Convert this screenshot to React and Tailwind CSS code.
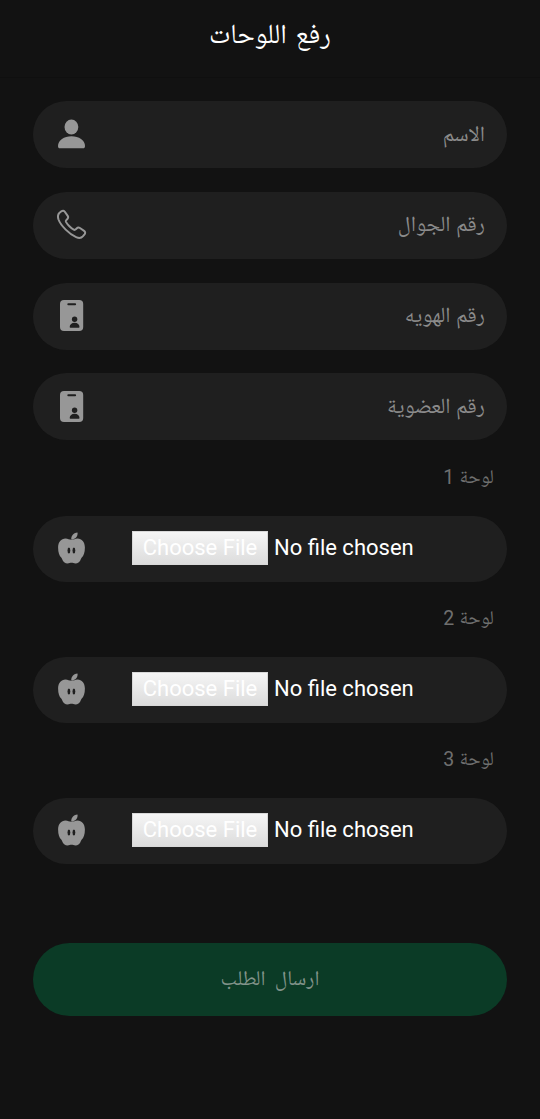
import React from "react";

const ARABIC = "font-['Roboto','Noto_Naskh_Arabic_UI','Noto_Naskh_Arabic','DejaVu_Sans',sans-serif]";

function PersonIcon() {
  return (
    <svg width="30" height="32" viewBox="0 0 30 32" fill="#979797">
      <ellipse cx="14.4" cy="8" rx="6.9" ry="7.4" />
      <path d="M1 26.900C1 21.500 7 17.300 14.500 17.300S28 21.500 28 26.900c0 1.600-.6 2.300-2 2.300H3c-1.400 0-2-.7-2-2.300Z" />
    </svg>
  );
}

function PhoneIcon() {
  return (
    <svg width="30" height="32" viewBox="0 0 30 32" fill="none" stroke="#979797" strokeWidth="2" strokeLinejoin="round">
      <path d="M2.3 3.6 4.4 1.9C5.7.9 7 1.1 7.8 2.3l2.9 4.2c.8 1.2.6 2.2-.5 3.3L9.300 10.700c-.6.6-.6 1.200-.2 2 .7 1.300 2 2.800 3.300 4.100s3 2.700 4.300 3.400c.8.4 1.400.4 2-.2l.9-.9c1.100-1.100 2.100-1.300 3.300-.5l4.200 2.900c1.200.8 1.400 2.100.4 3.400l-1.700 2.100c-1.500 1.700-3.700 2-6.700.7-3.500-1.500-7.200-4.300-10.400-7.500S2.700 13.300 1.500 10.100C.6 7.300.8 5.100 2.300 3.600Z" transform="translate(0 .4)" />
    </svg>
  );
}

function BadgeIcon() {
  return (
    <svg width="30" height="32" viewBox="0 0 30 32">
      <rect x="3" y="0" width="23.200" height="31" rx="4" fill="#979797" />
      <rect x="10.300" y="3.200" width="8.800" height="2" rx="1" fill="#1f1f1f" />
      <circle cx="17.600" cy="19.300" r="2.700" fill="#1f1f1f" />
      <path d="M12.700 27.100c0-2.600 2-4.300 4.900-4.300s4.900 1.700 4.900 4.300c0 .5-.2.700-.7.700h-8.400c-.5 0-.7-.2-.7-.7Z" fill="#1f1f1f" />
    </svg>
  );
}

function AppleIcon() {
  return (
    <svg width="30" height="32" viewBox="0 0 30 32">
      <path d="M14.300 7.600C13.800 4 16.200.9 20.500.4c.6 3.600-1.800 6.700-6.200 7.200Z" fill="#979797" />
      <path d="M8.500 6.400c2.400 0 3.700 1.300 6 1.300s3.700-1.300 6-1.300c4.300 0 7.400 3.500 7.400 9.200 0 5.100-1.300 8.300-3.100 10-.7.700-.8 1.500-1.400 2.600-.9 1.900-2.600 3.200-4.900 3.200-1.700 0-2.600-.6-4-.6s-2.300.6-4 .6c-2.300 0-4-1.300-4.900-3.200-.6-1.100-.7-1.900-1.400-2.600-1.800-1.700-3.100-4.900-3.100-10 0-5.700 3.100-9.200 7.400-9.200Z" fill="#979797" />
      <ellipse cx="11.900" cy="18.600" rx="1.400" ry="3" fill="#1f1f1f" />
      <ellipse cx="16.900" cy="18.600" rx="1.400" ry="3" fill="#1f1f1f" />
    </svg>
  );
}

const fields = [
  { label: "الاسم", Icon: PersonIcon },
  { label: "رقم الجوال", Icon: PhoneIcon },
  { label: "رقم الهويه", Icon: BadgeIcon },
  { label: "رقم العضوية", Icon: BadgeIcon },
];

function Field({ label, Icon }) {
  return (
    <div className="flex h-[67px] items-center justify-between rounded-full bg-[#1f1f1f] pr-[22px] pl-6">
      <Icon />
      <span dir="rtl" className="pt-[4px] text-[21.800px] leading-none text-[#8b8b8b]">{label}</span>
    </div>
  );
}

function FileField({ number }) {
  return (
    <div className="flex h-[141px] flex-col">
      <div dir="rtl" className="flex h-[75px] items-center gap-[5px] pt-[2px] pr-[13px] text-[19.500px] leading-none text-[#6f6f6f]">
        <span>لوحة</span>
        <span className="pb-[3px]">{number}</span>
      </div>
      <div className="flex h-[66px] items-center rounded-full bg-[#1f1f1f] pb-[2px] pl-6">
        <AppleIcon />
        <div className="ml-[45px] flex h-[34px] w-[136px] items-center justify-center border border-[#d8d8d8] bg-linear-to-b from-[#f5f5f5] to-[#dcdcdc] pt-px text-[22px] leading-none text-white">
          Choose File
        </div>
        <span className="ml-[6px] text-[22px] leading-none text-white">No file chosen</span>
      </div>
    </div>
  );
}

export default function App() {
  return (
    <div className={`flex h-[1119px] w-[540px] flex-col bg-[#121212] ${ARABIC}`}>
      <header className="flex h-[78px] items-center justify-center border-b border-[#0f0f0f] pb-[2px]">
        <h1 dir="rtl" className="text-[27.500px] leading-none text-white [word-spacing:2px]">رفع اللوحات</h1>
      </header>
      <main className="flex flex-col px-[33px] pt-[23px]">
        <div className="flex flex-col gap-[23.800px]">
          {fields.map((field) => <Field key={field.label} {...field} />)}
        </div>
        <div className="mt-[0.500px] flex flex-col">
          {[1, 2, 3].map((number) => <FileField key={number} number={number} />)}
        </div>
        <button dir="rtl" className="mt-[79px] flex h-[73px] items-center justify-center rounded-full bg-[#0b3b26] pt-[5px] text-[21px] leading-none text-[#82938a] [word-spacing:4px]">
          ارسال الطلب
        </button>
      </main>
    </div>
  );
}
